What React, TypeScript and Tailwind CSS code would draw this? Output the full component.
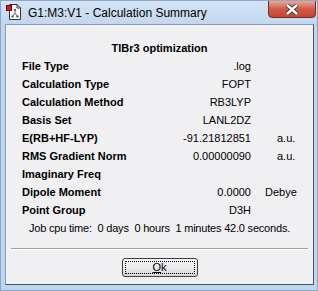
import React from "react";

const rows: { label: string; value: string; unit?: string; unitPad?: string }[] = [
  { label: "File Type", value: ".log" },
  { label: "Calculation Type", value: "FOPT" },
  { label: "Calculation Method", value: "RB3LYP" },
  { label: "Basis Set", value: "LANL2DZ" },
  { label: "E(RB+HF-LYP)", value: "-91.21812851", unit: "a.u.", unitPad: "pl-[26px]" },
  { label: "RMS Gradient Norm", value: "0.00000090", unit: "a.u.", unitPad: "pl-[26px]" },
  { label: "Imaginary Freq", value: "" },
  { label: "Dipole Moment", value: "0.0000", unit: "Debye", unitPad: "pl-[14px]" },
  { label: "Point Group", value: "D3H" },
];

function AppIcon() {
  return (
    <svg width="16" height="17" viewBox="0 0 16 17">
      <path d="M3.5 1.5 H11 L14.5 5 V16.5 H3.5 Z" fill="#fff" stroke="#333" />
      <path d="M11 1.5 V5 H14.5" fill="none" stroke="#333" />
      <line x1="9" y1="7" x2="9" y2="10" stroke="#888" strokeWidth="1.2" />
      <line x1="9" y1="10" x2="6.5" y2="13.5" stroke="#888" strokeWidth="1.2" />
      <line x1="9" y1="10" x2="11.5" y2="13.5" stroke="#888" strokeWidth="1.2" />
      <circle cx="9" cy="7" r="1.2" fill="#666" />
      <circle cx="6.5" cy="13.5" r="1.2" fill="#666" />
      <circle cx="11.5" cy="13.5" r="1.2" fill="#666" />
      <rect x="0.5" y="2.5" width="5" height="5" fill="#e0141e" stroke="#700" />
    </svg>
  );
}

export default function App() {
  const font = { fontFamily: '"Liberation Sans", Arial, sans-serif' };
  return (
    <div
      className="w-[318px] h-[291px] flex flex-col bg-[#c0d6ef] border border-[#8ca6c6] overflow-hidden"
      style={font}
    >
      {/* title bar */}
      <div className="h-[23px] flex items-start relative bg-gradient-to-b from-[#d3e3f5] to-[#c2d7ef]">
        <div className="ml-[5px] mt-[2px]">
          <AppIcon />
        </div>
        <div className="ml-[6px] mt-[5px] text-[12px] leading-[15px] text-black">
          G1:M3:V1 - Calculation Summary
        </div>
        <div className="absolute right-[1px] top-[-1px] w-[48px] h-[18px] rounded-b-[4px] border border-[#7a2a22] bg-gradient-to-b from-[#e8a898] via-[#cf5a45] to-[#c94430] flex items-center justify-center">
          <svg width="14" height="11" viewBox="0 0 14 11">
            <path
              d="M2 1 L7 5.5 L12 1 M2 10 L7 5.5 L12 10"
              stroke="#2a3340"
              strokeWidth="4.2"
              fill="none"
            />
            <path
              d="M2 1 L7 5.5 L12 1 M2 10 L7 5.5 L12 10"
              stroke="#ffffff"
              strokeWidth="2.4"
              fill="none"
            />
          </svg>
        </div>
      </div>

      {/* content panel */}
      <div className="ml-[4px] mr-[3px] h-[261px] border border-t-[#8a9bb0] border-l-[#8a9bb0] border-r-[#4a5360] border-b-[#4a5360] bg-[#f0eff2] flex flex-col text-[11px] text-black">
        <div className="h-[14px]" />
        <div className="h-[18px] leading-[18px] text-center font-bold">TlBr3 optimization</div>
        <div className="pl-[16px] pr-[5px] flex flex-col">
          {rows.map((r) => (
            <div key={r.label} className="h-[18px] leading-[18px] flex">
              <div className="flex-1 font-bold">{r.label}</div>
              <div className="text-right">{r.value}</div>
              <div className={`w-[57px] ${r.unitPad ?? ""}`}>{r.unit ?? ""}</div>
            </div>
          ))}
        </div>
        <div className="h-[18px] leading-[18px] text-center whitespace-pre tracking-[-0.2px]">
          {"Job cpu time:  0 days  0 hours  1 minutes 42.0 seconds."}
        </div>
        <div className="h-[11px]" />
        <div className="mx-[5px] h-[2px] border-t border-t-[#a0a0a0] border-b border-b-white" />
        <div className="h-[8px]" />
        <div className="flex justify-center">
          <button className="w-[76px] h-[19px] rounded-[3px] border border-[#404040] bg-gradient-to-b from-[#f4f4f4] via-[#ebebeb] to-[#d6d6d6] p-[2px]">
            <div className="w-full h-full border border-dotted border-black flex items-center justify-center leading-[11px] text-[11px]">
              <span>
                <span className="underline">O</span>k
              </span>
            </div>
          </button>
        </div>
      </div>
    </div>
  );
}
